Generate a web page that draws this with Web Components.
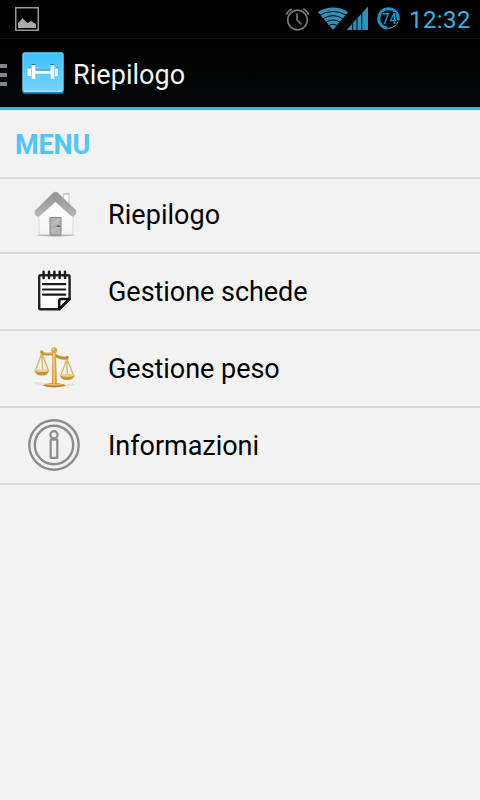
<!DOCTYPE html>
<html lang="it">
<head>
<meta charset="utf-8">
<title>Riepilogo</title>
<style>
    body {
        margin: 0;
        background: #f2f2f2;
        font-family: Roboto, "Liberation Sans", sans-serif;
    }
</style>
</head>
<body>
<app-screen>
    <status-bar slot="top" time="12:32" battery="74"></status-bar>
    <action-bar slot="top">Riepilogo</action-bar>
    <menu-header>MENU</menu-header>
    <menu-item icon="house" class="first">Riepilogo</menu-item>
    <menu-item icon="notes">Gestione schede</menu-item>
    <menu-item icon="scales">Gestione peso</menu-item>
    <menu-item icon="info">Informazioni</menu-item>
</app-screen>

<script>
// every menu icon is drawn on a 70x70 canvas
const ICONS = {
    house: `
        <defs>
            <linearGradient id="roof" x1="0" y1="0" x2="0" y2="1">
                <stop offset="0" stop-color="#929292"/><stop offset="1" stop-color="#b4b4b4"/>
            </linearGradient>
            <linearGradient id="wall" x1="0" y1="0" x2="0" y2="1">
                <stop offset="0" stop-color="#fff"/><stop offset="1" stop-color="#f5f5f5"/>
            </linearGradient>
            <radialGradient id="shade">
                <stop offset="0" stop-color="#999"/><stop offset=".7" stop-color="#b5b5b5"/><stop offset="1" stop-color="#f2f2f2" stop-opacity="0"/>
            </radialGradient>
        </defs>
        <ellipse cx="35.5" cy="55.2" rx="22.5" ry="1.7" fill="url(#shade)"/>
        <path d="M43.5 22V14h5.5v12" fill="#f8f8f8" stroke="#c6c6c6"/>
        <path d="M42.8 13.7h6.8" stroke="#c4c4c4" stroke-width="1.4"/>
        <path d="M19 32L35.5 17 53 32V54.8H19z" fill="url(#wall)" stroke="#d2d2d2"/>
        <path d="M33.2 12.8Q35.5 11.4 37.8 12.8L56 30.6 55.6 34 53.3 36.3 50.8 35.4 35.5 21.8 19.8 35.6 17.3 36.3 15.2 34 15 30.8z" fill="url(#roof)" stroke="#aaa" stroke-width=".6"/>
        <path d="M30 55V37.5h11V55z" fill="#b3b3b3" stroke="#858585"/>
        <path d="M31.2 45L40 39M31.2 52L40 46" stroke="#c5c5c5" stroke-width="1.2"/>
        <path d="M36.8 46.2h3.4" stroke="#444" stroke-width="1.3"/>`,
    notes: `
        <path d="M20.8 19.3h27.4q1.4 0 1.4 1.4V43L39.4 53.3H20.8q-1.6 0-1.6-1.6V20.7q0-1.4 1.6-1.4z" fill="#fff" stroke="#222" stroke-width="2.4"/>
        <path d="M39.2 53V45q0-2 2-2h8.2z" fill="#fff" stroke="#111" stroke-width="2.5" stroke-linejoin="round"/>
        <path d="M23 28.2h22.3M23 33.5h22.3M23 38.7h22.3" stroke="#1c1c1c" stroke-width="2.2" stroke-linecap="round"/>
        <path d="M23.6 15.8v6.2M29 15.8v6.2M34.4 15.8v6.2M39.7 15.8v6.2M45 15.8v6.2" stroke="#1c1c1c" stroke-width="2.5" stroke-linecap="round"/>`,
    scales: `
        <defs>
            <linearGradient id="gold" x1="0" y1="0" x2="1" y2="0">
                <stop offset="0" stop-color="#c08a25"/><stop offset=".45" stop-color="#f4d477"/><stop offset="1" stop-color="#b67d1b"/>
            </linearGradient>
        </defs>
        <path d="M15.5 49l12 1.2M43 51.5l10-.7" stroke="#e0e0e2" stroke-width="2.6" stroke-linecap="round"/>
        <g fill="none" stroke="#dab566" stroke-width="1.4">
            <path d="M21.8 19L15.7 36M21.8 19l.7 18M21.8 19l6.4 17M47 25l-6 16M47 25l.3 17M47 25l6.5 16"/>
        </g>
        <path d="M21.5 18.8C27 22 30 18.5 34 20.7S42 25.6 47.5 23.8" fill="none" stroke="#c6902d" stroke-width="2.8"/>
        <path d="M22 18C27 21 30 18 34 20" fill="none" stroke="#e4bb5d"/>
        <path d="M32.5 18h3.4l.8 32h-4.8z" fill="url(#gold)"/>
        <circle cx="34.2" cy="16.200" r="2.900" fill="#d8a848"/>
        <circle cx="33.5" cy="15.500" r="1" fill="#f0d083"/>
        <circle cx="21.8" cy="18" r="1.7" fill="#c8922e"/>
        <circle cx="47" cy="23.5" r="1.8" fill="#c8922e"/>
        <path d="M14.5 36h14.7q-.8 5.6-7.3 5.6T14.5 36z" fill="#c59035"/>
        <ellipse cx="21.9" cy="36.6" rx="7" ry="1.7" fill="#ecd083"/>
        <path d="M39.7 41h15q-.8 5-7.4 5T39.7 41z" fill="#c59035"/>
        <ellipse cx="47.2" cy="41.3" rx="7" ry="1.6" fill="#ecd083"/>
        <path d="M23 51.7Q24 50 31 49.2h6.5Q44.5 50 45.5 51.7 40 53.5 34 53.5T23 51.7z" fill="#b98125"/>
        <ellipse cx="34.2" cy="50.5" rx="8" ry="1.1" fill="#e2bc64"/>`,
    info: `
        <g fill="none" stroke="#8c8c8c" stroke-width="2.4">
            <circle cx="34" cy="35" r="24.7"/>
            <circle cx="34" cy="35" r="19.2"/>
            <circle cx="34" cy="24.7" r="3.6" stroke-width="2.2"/>
            <path d="M30.7 29.6h6.6v18.2h-6.6z" stroke-width="2.2" stroke-linejoin="round"/>
        </g>`
};

class AppScreen extends HTMLElement {
    connectedCallback() {
        const shadow = this.attachShadow({ mode: 'open' });
        shadow.innerHTML = `
            <style>
                :host {
                    display: flex;
                    flex-direction: column;
                    height: 800px;
                    overflow: hidden;
                    background: #f2f2f2;
                }
                main {
                    display: flex;
                    flex-direction: column;
                }
            </style>
            <slot name="top"></slot>
            <main><slot></slot></main>
        `;
    }
}

class StatusBar extends HTMLElement {
    connectedCallback() {
        this.render();
    }
    getTime() {
        return this.getAttribute('time');
    }
    getBattery() {
        return this.getAttribute('battery');
    }
    renderStyle() {
        return `
            <style>
                :host {
                    display: flex;
                    justify-content: space-between;
                    height: 38px;
                    background: #000;
                }
                svg {
                    display: block;
                }
                .right {
                    display: flex;
                }
                .time {
                    width: 72px;
                    box-sizing: border-box;
                    padding-left: 1px;
                    color: #33b5e5;
                    font-size: 24px;
                    line-height: 40px;
                    letter-spacing: 0.4px;
                    white-space: nowrap;
                }
            </style>
        `;
    }
    render() {
        const shadow = this.attachShadow({ mode: 'open' });
        shadow.innerHTML = `
            ${this.renderStyle()}
            <svg width="54" height="38" viewBox="0 0 54 38">
                <rect x="15.75" y="7.75" width="22.5" height="22.5" fill="none" stroke="#999" stroke-width="1.5"/>
                <path d="M18 28v-5l2-2 2.5-2.700 3 3 2 1.700 3.500-2 3 2 2 1V28z" fill="#aaa"/>
            </svg>
            <div class="right">
                <svg width="128" height="38" viewBox="280 0 128 38">
                    <g fill="none" stroke="#757575" stroke-width="1.7">
                        <circle cx="297.5" cy="20" r="9.8"/>
                        <path d="M297 13.5V20l4.5 4.5"/>
                        <path d="M286.3 14.8q1.5-4 5.500-5.800M303.200 9q4 1.800 5.500 5.800"/>
                    </g>
                    <path d="M333 30L317.800 12Q324.500 7.500 333 7.500T348.200 12z" fill="#2d91b8"/>
                    <path d="M319.500 15.300Q333 7.500 346.500 15.300M322.500 19Q333 12.300 343.500 19M325.500 22.500Q333 17.300 340.500 22.500M328.500 26Q333 22.600 337.500 26" fill="none" stroke="#000" stroke-width="1"/>
                    <path d="M346.500 30L368 6.500V30z" fill="#2d91b8"/>
                    <path d="M352.600 20v10M357 15v15M361.700 10v20" stroke="#04202b" stroke-width="1.200"/>
                    <circle cx="388.500" cy="18.500" r="9.800" fill="none" stroke="#0d98cf" stroke-width="3"/>
                    <path d="M400.500 20.500A12 12 0 0 1 387.500 31V26A8 8 0 0 0 396.500 20.500z" fill="#000"/>
                    <path d="M398 21.500A10 10 0 0 1 387.500 28.200" fill="none" stroke="#a9a19b" stroke-width="1"/>
                    <text x="389.500" y="23.500" text-anchor="middle" font-size="14" font-weight="500" fill="#1299d0" stroke="#000" stroke-width="1.500" paint-order="stroke" textLength="14.500" lengthAdjust="spacingAndGlyphs">${this.getBattery()}</text>
                </svg>
                <div class="time">${this.getTime()}</div>
            </div>
        `;
    }
}

class ActionBar extends HTMLElement {
    connectedCallback() {
        const shadow = this.attachShadow({ mode: 'open' });
        shadow.innerHTML = `
            <style>
                :host {
                    display: flex;
                    box-sizing: border-box;
                    height: 72px;
                    border-top: 1px solid #141414;
                    border-bottom: 3px solid #33b5e5;
                    background: linear-gradient(#000, #050708);
                    color: #f3f3f3;
                    font-size: 27px;
                    line-height: 73px;
                }
                svg {
                    display: block;
                    margin-right: 7px;
                }
                .title {
                    letter-spacing: 0.05px;
                }
            </style>
            <svg width="66" height="68" viewBox="0 39 66 68">
                <defs>
                    <linearGradient id="tile" x1="0" y1="0" x2="0" y2="1">
                        <stop offset="0" stop-color="#40c0ff"/><stop offset="1" stop-color="#74d3ff"/>
                    </linearGradient>
                </defs>
                <path d="M0 64h7v4H0zM0 73h7v4H0zM0 82h7v4H0z" fill="#85888b"/>
                <rect x="22.3" y="52.3" width="41.4" height="41.4" rx="2" fill="#148cc4"/>
                <rect x="23" y="53" width="40" height="38.3" rx="1.5" fill="url(#tile)" stroke="#80d5fc" stroke-width="1"/>
                <path d="M24 91.2h38" stroke="#d0f0ff" stroke-width="1"/>
                <path d="M31.5 64.5h4M50.5 64.5h4M28 68h2.5M56 68h2.5M35.500 70.200h15" stroke="#1c82b4" stroke-width="1"/>
                <path d="M27.500 68.500h3.500v7.500h-3.500zM31.700 65h3.600v14h-3.600zM50.700 65h3.600v14h-3.600zM55 68.500h3v7.500h-3zM35 70.700h16v3H35z" fill="#fff"/>
            </svg>
            <span class="title"><slot></slot></span>
        `;
    }
}

class MenuHeader extends HTMLElement {
    connectedCallback() {
        const shadow = this.attachShadow({ mode: 'open' });
        shadow.innerHTML = `
            <style>
                :host {
                    display: block;
                    height: 67px;
                    padding-left: 15px;
                    border-bottom: 2px solid #d9d9d9;
                    color: #4dc6ff;
                    font-size: 27px;
                    font-weight: bold;
                    line-height: 71px;
                    letter-spacing: -0.15px;
                }
            </style>
            <slot></slot>
        `;
    }
}

class MenuItem extends HTMLElement {
    connectedCallback() {
        this.render();
    }
    getIcon() {
        return ICONS[this.getAttribute('icon')] || '';
    }
    renderStyle() {
        return `
            <style>
                :host {
                    display: flex;
                    height: 75px;
                    padding-left: 20px;
                    border-bottom: 2px solid #d9d9d9;
                    color: #000;
                    font-size: 27px;
                    line-height: 77px;
                    letter-spacing: -0.04px;
                }
                :host(.first) {
                    height: 73px;
                    line-height: 72px;
                    letter-spacing: 0.05px;
                }
                svg {
                    display: block;
                    margin: 2px 18px 0 0;
                }
                :host(.first) svg {
                    margin-top: 1px;
                }
                :host([icon="scales"]) svg {
                    margin-top: 3px;
                }
            </style>
        `;
    }
    render() {
        const shadow = this.attachShadow({ mode: 'open' });
        shadow.innerHTML = `
            ${this.renderStyle()}
            <svg width="70" height="70" viewBox="0 0 70 70" fill="none">${this.getIcon()}</svg>
            <span><slot></slot></span>
        `;
    }
}

customElements.define('app-screen', AppScreen);
customElements.define('status-bar', StatusBar);
customElements.define('action-bar', ActionBar);
customElements.define('menu-header', MenuHeader);
customElements.define('menu-item', MenuItem);
</script>
</body>
</html>
